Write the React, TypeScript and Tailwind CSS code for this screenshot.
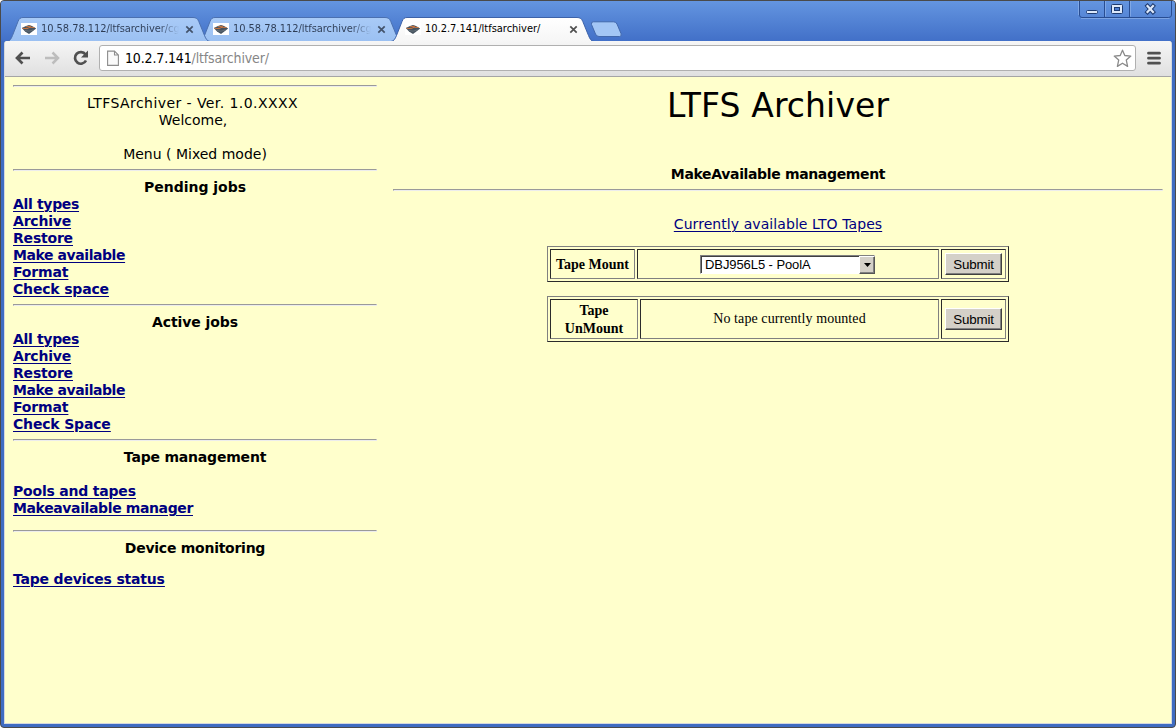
import type { ReactNode } from "react";

const TAB_EDGE = "M0 24.5C3 24 4 22 5.500 18.500L11 4.500C12.200 1.500 13.500 .5 16 .5H186C189 .5 190.500 1.500 191.800 4.500L197.500 18.500C199 22 200 24 203 24.500";

function Favicon() {
  return (
    <svg className="relative h-4 w-4 shrink-0" viewBox="0 0 16 16">
      <rect y="2" width="16" height="12" fill="#fff" />
      <path d="M.8 7L5 5 8 4 11 5 15.200 7.500 12 10 8 13 4 10.500Z" fill="#46535f" />
      <path d="M1.500 7.300L6 7.600 9 6.300 13.500 6.500M5 5.800L10 5.200" stroke="#c9743f" strokeWidth="1" fill="none" />
      <path d="M4 9.500L8 10.200 12.500 8.800" stroke="#6b7680" strokeWidth=".8" fill="none" />
    </svg>
  );
}

function Tab({ children, active, className }: { children: ReactNode; active?: boolean; className: string }) {
  return (
    <div className={`relative flex h-6 w-[203px] shrink-0 items-center pl-[14px] ${className}`}>
      <svg className="absolute inset-0 h-6 w-[203px]" viewBox="0 0 203 24">
        <defs>
          <linearGradient id="activeTab" x1="0" y1="0" x2="0" y2="1">
            <stop offset="0" stopColor="#ffffff" />
            <stop offset="1" stopColor="#f6f6f6" />
          </linearGradient>
          <linearGradient id="idleTab" x1="0" y1="0" x2="0" y2="1">
            <stop offset="0" stopColor="#a9cbf7" />
            <stop offset="1" stopColor="#9bc0f2" />
          </linearGradient>
        </defs>
        <path d={TAB_EDGE} fill={active ? "url(#activeTab)" : "url(#idleTab)"} stroke={active ? "#3d62a8" : "#4b70b0"} strokeWidth="1" />
      </svg>
      <Favicon />
      {children}
      <svg className="absolute left-[178px] top-2 h-[9px] w-[9px]" viewBox="0 0 9 9">
        <path d="M1.300 1.300L7.700 7.700M7.700 1.300L1.300 7.700" stroke={active ? "#505050" : "#43536b"} strokeWidth="1.700" />
      </svg>
    </div>
  );
}

function TitleBar() {
  return (
    <div className="flex h-[40px] shrink-0 justify-between bg-linear-to-b from-[#6495e0] to-[#4270c8] pl-[6px]">
      <div className="flex pt-4 font-['DejaVu_Sans_Condensed','DejaVu_Sans',sans-serif] text-[11px]">
        <Tab className="z-10">
          <span className="relative ml-[4px] w-[138px] overflow-hidden whitespace-nowrap bg-linear-to-r from-[#2d3c55] from-85% to-[#a2c5f4] bg-clip-text tracking-[-0.05px] text-transparent">10.58.78.112/ltfsarchiver/cg</span>
        </Tab>
        <Tab className="-ml-[11px]">
          <span className="relative ml-[4px] w-[138px] overflow-hidden whitespace-nowrap bg-linear-to-r from-[#2d3c55] from-85% to-[#a2c5f4] bg-clip-text tracking-[-0.05px] text-transparent">10.58.78.112/ltfsarchiver/cg</span>
        </Tab>
        <Tab active className="z-20 -ml-[11px]">
          <span className="relative ml-[4px] whitespace-nowrap tracking-[-0.02px] text-black">10.2.7.141/ltfsarchiver/</span>
        </Tab>
        <svg className="-ml-[4px] mt-[4px] h-[18px] w-8" viewBox="0 0 32 18">
          <path d="M3.500 .8H23.500Q26 .8 27 3L31 12.500Q32 15.500 29.500 15.500H9Q6.500 15.500 5.500 13L1.500 3.500Q.8.8 3.500.8Z" fill="#a3c6f5" stroke="#4268ac" />
        </svg>
      </div>
      <svg className="mr-[2px] h-[18px] w-[95px] shrink-0" viewBox="0 0 95 18">
        <path d="M1.500 0V14Q1.500 16.500 4 16.500H90.500Q93.500 16.500 93.500 14V0M26.500 0V16.500M51.500 0V16.500" fill="none" stroke="#284d92" />
        <path d="M3 17.500H91.500M.5 0V14M27.500 0V15.500M52.500 0V15.500" stroke="#8db0e8" strokeOpacity=".7" fill="none" />
        <rect x="8.500" y="9.500" width="11" height="3" rx="1" fill="#dce8fa" stroke="#1e3b70" />
        <rect x="33.500" y="3.500" width="11" height="9" rx="1" fill="#dce8fa" stroke="#1e3b70" />
        <rect x="36.500" y="6.500" width="5" height="3" fill="#4c7cd0" stroke="#1e3b70" />
        <path d="M69.500 5L75 11M75 5L69.500 11" stroke="#1e3b70" strokeWidth="4.200" strokeLinecap="square" />
        <path d="M69.500 5L75 11M75 5L69.500 11" stroke="#dce8fa" strokeWidth="2.200" strokeLinecap="square" />
      </svg>
    </div>
  );
}

function Toolbar() {
  return (
    <div className="flex h-[36px] shrink-0 items-center border-b border-[#a5a5a5] bg-linear-to-b from-[#f6f6f6] to-[#e0e0e0] pb-px pl-[10px]">
      <svg className="h-5 w-[75px] shrink-0" viewBox="0 0 75 20" fill="none">
        <path d="M7.500 4.500L2 10 7.500 15.500M2 10H15" stroke="#505050" strokeWidth="2.700" />
        <path d="M37.500 4.500L43 10 37.500 15.500M43 10H30" stroke="#bdbdbd" strokeWidth="2.500" />
        <path d="M70.500 6.500A5.800 5.800 0 1 0 71 12.500" stroke="#505050" strokeWidth="2.700" />
        <path d="M73 2.500V9.500H66Z" fill="#505050" />
      </svg>
      <div className="ml-[9px] flex h-[26px] w-[1037px] items-center rounded-[3px] border border-[#b0b0b0] bg-white pl-[7px] pr-[3px]">
        <svg className="h-4 w-3 shrink-0" viewBox="0 0 12 16">
          <path d="M.6 1.100H7.500L11.400 5V15.400H.6Z M7.500 1.100V5H11.400" fill="#fafafa" stroke="#8d8d8d" strokeWidth="1.100" />
        </svg>
        <div className="ml-[6px] grow whitespace-nowrap font-['DejaVu_Sans_Condensed','DejaVu_Sans',sans-serif] text-[14px] leading-5 tracking-[-0.15px] text-[#868686]">
          <span className="text-black">10.2.7.141</span>/ltfsarchiver/
        </div>
        <svg className="h-[19px] w-[19px]" viewBox="0 0 19 19">
          <path d="M9.500 1.200L11.800 6.500 17.800 7.100 13.300 11.100 14.600 17.400 9.500 14.200 4.400 17.400 5.700 11.100 1.200 7.100 7.200 6.500Z" fill="#fff" stroke="#8a8a8a" strokeWidth="1.300" strokeLinejoin="round" />
        </svg>
      </div>
      <svg className="ml-[11px] h-[14px] w-[14px]" viewBox="0 0 14 14">
        <path d="M1.500 2.200H12.500M1.500 7.200H12.500M1.500 12.200H12.500" stroke="#505050" strokeWidth="2.800" strokeLinecap="round" />
      </svg>
    </div>
  );
}

function Rule() {
  return <div className="h-[2px] border border-b-[#ececec] border-l-[#9a9a9a] border-r-[#ececec] border-t-[#9a9a9a]" />;
}

function Links({ children }: { children: ReactNode }) {
  return <nav className="flex flex-col items-start font-bold text-[#000080] underline decoration-1 underline-offset-2">{children}</nav>;
}

function JobLinks({ last }: { last: string }) {
  return (
    <Links>
      <a className="tracking-[-0.33px]">All types</a>
      <a className="tracking-[-0.2px]">Archive</a>
      <a className="tracking-[-0.2px]">Restore</a>
      <a className="tracking-[-0.43px]">Make available</a>
      <a className="tracking-[-0.17px]">Format</a>
      <a className="tracking-[-0.18px]">{last}</a>
    </Links>
  );
}

function Sidebar() {
  return (
    <aside className="w-[364px] shrink-0 text-[14px] leading-[17px] text-black">
      <Rule />
      <div className="pb-[6px] pt-[8px] text-center">
        <div className="pr-[5px] tracking-[0.43px]">LTFSArchiver - Ver. 1.0.XXXX</div>
        <div className="pr-[4px]">Welcome,</div>
        <div className="pt-[17px]">Menu ( Mixed mode)</div>
      </div>
      <Rule />
      <div className="pb-[6px] pt-[8px]">
        <h2 className="text-center font-bold">Pending jobs</h2>
        <JobLinks last="Check space" />
      </div>
      <Rule />
      <div className="pb-[6px] pt-[8px]">
        <h2 className="text-center font-bold tracking-[-0.08px]">Active jobs</h2>
        <JobLinks last="Check Space" />
      </div>
      <Rule />
      <div className="pb-[13px] pt-[8px]">
        <h2 className="mb-[17px] text-center font-bold tracking-[-0.2px]">Tape management</h2>
        <Links>
          <a className="tracking-[-0.2px]">Pools and tapes</a>
          <a className="tracking-[-0.38px]">Makeavailable manager</a>
        </Links>
      </div>
      <Rule />
      <h2 className="mb-[14px] mt-[8px] text-center font-bold tracking-[-0.26px]">Device monitoring</h2>
      <Links><a className="tracking-[-0.2px]">Tape devices status</a></Links>
    </aside>
  );
}

function Cell({ className, children }: { className: string; children: ReactNode }) {
  return (
    <div className={`flex items-center justify-center border border-b-[#808080] border-l-[#2b2b2b] border-r-[#808080] border-t-[#2b2b2b] ${className}`}>
      {children}
    </div>
  );
}

function Frame({ className, children }: { className: string; children: ReactNode }) {
  return (
    <div className={`flex w-[462px] gap-[2px] border border-b-[#2b2b2b] border-l-[#808080] border-r-[#2b2b2b] border-t-[#808080] p-[2px] font-['Liberation_Serif',serif] text-[14px] leading-[18px] text-black ${className}`}>
      {children}
    </div>
  );
}

function Submit() {
  return (
    <button className="h-[22px] w-[57px] border border-b-[#404040] border-l-white border-r-[#404040] border-t-white bg-[#d4d0c8] pt-[2px] text-center font-['Liberation_Sans',sans-serif] text-[13.33px] leading-[18px] tracking-[-0.15px] text-black shadow-[inset_-1px_-1px_#808080]">
      Submit
    </button>
  );
}

function Main() {
  return (
    <main className="flex w-[770px] flex-col items-center text-[14px] leading-[17px] text-black">
      <h1 className="h-10 pt-px text-[33px] leading-10 tracking-[0.1px]">LTFS Archiver</h1>
      <h2 className="mt-[41px] font-bold tracking-[-0.35px]">MakeAvailable management</h2>
      <div className="mt-[6px] w-full"><Rule /></div>
      <a className="mt-[25px] tracking-[0.07px] text-[#000080] underline decoration-1 underline-offset-2">Currently available LTO Tapes</a>
      <Frame className="mt-[13px] h-[36px]">
        <Cell className="w-[85px] pt-px font-bold">Tape Mount</Cell>
        <Cell className="w-[302px]">
          <div className="ml-[-1px] flex h-[19px] w-[175px] items-end justify-between border border-b-white border-l-[#808080] border-r-white border-t-[#808080] bg-white shadow-[inset_1px_1px_#404040]">
            <span className="pl-[4px] font-['Liberation_Sans',sans-serif] text-[13px] leading-[17px] tracking-[-0.08px]">DBJ956L5 - PoolA</span>
            <span className="mb-[-1px] mr-[-1px] flex h-[18px] w-4 shrink-0 items-center justify-center border border-b-[#555] border-l-white border-r-[#555] border-t-white bg-[#d4d0c8] shadow-[inset_-1px_-1px_#808080]">
              <svg className="h-1 w-[7px]" viewBox="0 0 7 4"><path d="M0 0H7L3.500 4Z" /></svg>
            </span>
          </div>
        </Cell>
        <Cell className="w-[65px]"><Submit /></Cell>
      </Frame>
      <Frame className="mt-[14px] h-[46px]">
        <Cell className="w-[88px] pt-[2px] text-center font-bold"><span>Tape<br />UnMount</span></Cell>
        <Cell className="w-[299px] tracking-[0.08px]">No tape currently mounted</Cell>
        <Cell className="w-[65px]"><Submit /></Cell>
      </Frame>
    </main>
  );
}

export default function App() {
  return (
    <div className="flex h-[728px] w-[1176px] flex-col overflow-hidden rounded-[4px] border border-[#4a4a4a] bg-[#3f6cc2]">
      <TitleBar />
      <div className="mx-[3px] mb-[3px] flex grow flex-col overflow-hidden rounded-t-[3px] border-x border-b border-[#d4d8dc] bg-[#ffffcc]">
        <Toolbar />
        <div className="flex gap-4 pl-[8px] pt-[8px] font-['DejaVu_Sans',sans-serif]">
          <Sidebar />
          <Main />
        </div>
      </div>
    </div>
  );
}
